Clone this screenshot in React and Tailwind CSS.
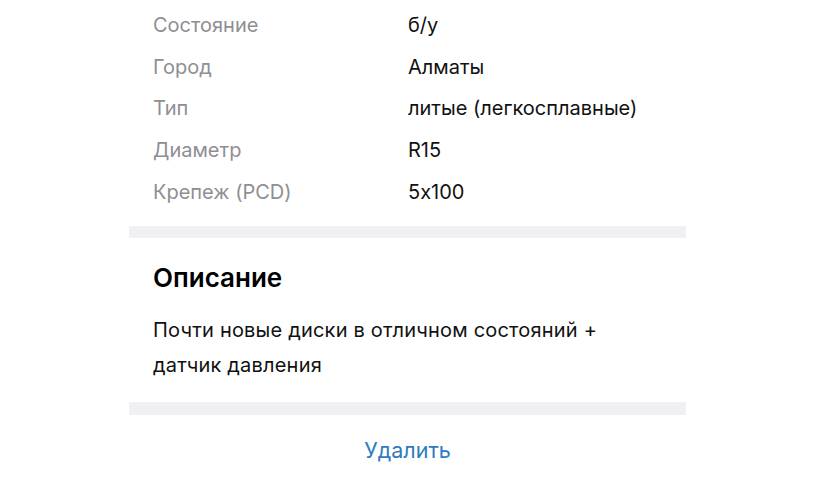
export default function App() {
  const rows = [
    ["Состояние", "б/у"],
    ["Город", "Алматы"],
    ["Тип", "литые (легкосплавные)"],
    ["Диаметр", "R15"],
    ["Крепеж (PCD)", "5x100"],
  ];
  return (
    <div
      className="w-full h-[480px] bg-white overflow-hidden [font-feature-settings:'calt'_0]"
      style={{ fontFamily: "Inter, 'Noto Sans', sans-serif" }}
    >
      <div className="w-[557px] ml-[129px]">
        <div className="pt-[4px] pb-[14px] px-6">
          {rows.map(([k, v]) => (
            <div key={k} className="grid grid-cols-[255px_1fr] h-[41.7px] items-center text-[20px] leading-[28px]">
              <span className="text-[#8e8e93]">{k}</span>
              <span className="text-[#111]">{v}</span>
            </div>
          ))}
        </div>
        <div className="h-[12px] bg-[#efeff4]" />
        <div className="px-6 pt-[25px] pb-[19px]">
          <h2 className="text-[26px] font-semibold text-black leading-[30px]">Описание</h2>
          <p className="mt-[20px] text-[20px] leading-[35px] text-[#111] tracking-[0.2px]">
            Почти новые диски в отличном состояний +<br />датчик давления
          </p>
        </div>
        <div className="h-[13px] bg-[#efeff4]" />
        <div className="flex justify-center pt-[20px]">
          <span className="text-[21.5px] leading-[30px] text-[#2f7ac0]">Удалить</span>
        </div>
      </div>
    </div>
  );
}
